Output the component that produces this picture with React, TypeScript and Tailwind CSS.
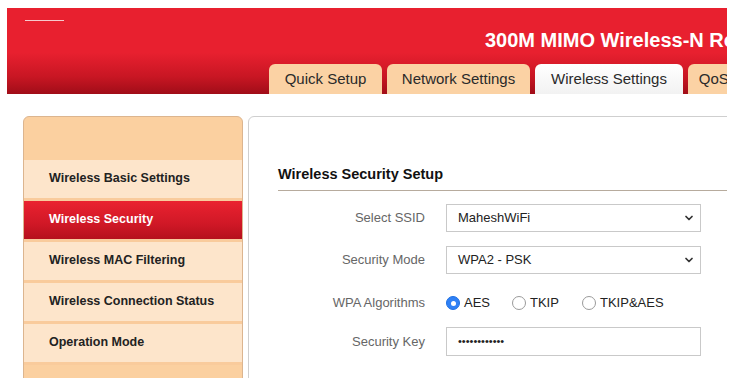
import { ChevronDown } from 'lucide-react';

const tabs = [
  { label: 'Quick Setup', w: 'w-[113px]', active: false },
  { label: 'Network Settings', w: 'w-[143px]', active: false },
  { label: 'Wireless Settings', w: 'w-[148px]', active: true },
  { label: 'QoS Settings', w: 'w-[110px]', active: false },
];

const menu = [
  { label: 'Wireless Basic Settings', active: false },
  { label: 'Wireless Security', active: true },
  { label: 'Wireless MAC Filtering', active: false },
  { label: 'Wireless Connection Status', active: false },
  { label: 'Operation Mode', active: false },
];

function Select({ value }: { value: string }) {
  return (
    <div className="flex h-[28px] w-[255px] items-center justify-between border border-[#c9c9c9] bg-white pl-[11px] pr-[5px] text-[13px] text-[#222]">
      <span>{value}</span>
      <ChevronDown size={12} strokeWidth={3.5} className="text-[#333]" />
    </div>
  );
}

function Radio({ label, checked }: { label: string; checked?: boolean }) {
  return (
    <div className="flex items-center gap-[4px]">
      {checked ? (
        <span className="flex h-[14px] w-[14px] items-center justify-center rounded-full border border-[#1d6fe3] bg-[#2f80f5]">
          <span className="h-[5px] w-[5px] rounded-full bg-white" />
        </span>
      ) : (
        <span className="h-[14px] w-[14px] rounded-full border border-[#9a9a9a] bg-white" />
      )}
      <span className="text-[13px] text-[#222]">{label}</span>
    </div>
  );
}

function Row({ label, className, children }: { label: string; className?: string; children: React.ReactNode }) {
  return (
    <div className={`flex items-center ${className ?? ''}`}>
      <div className="w-[176px] text-right text-[13px] text-[#666]">{label}</div>
      <div className="ml-[21px]">{children}</div>
    </div>
  );
}

export default function App() {
  return (
    <div
      className="h-[378px] w-[739px] overflow-hidden bg-white pl-[7px] pt-[8px]"
      style={{ fontFamily: '"Liberation Sans", Arial, sans-serif' }}
    >
      <div className="w-[720px] overflow-hidden">
        {/* header */}
        <div className="flex h-[86px] flex-col overflow-hidden bg-[linear-gradient(to_bottom,#e8202f_0%,#e8202f_52%,#c81623_80%,#a00d18_100%)]">
          <div className="ml-[18px] mt-[12px] h-px w-[39px] bg-[#f6c9cc]" />
          <div className="mt-[8px] whitespace-nowrap pl-[478px] text-[20px] font-bold leading-[23px] text-white">
            300M MIMO Wireless-N Router
          </div>
          <div className="mt-auto flex h-[30px] gap-[5px] pl-[262px]">
            {tabs.map((t) => (
              <div
                key={t.label}
                className={`flex shrink-0 items-center justify-center whitespace-nowrap rounded-t-[6px] text-[15px] text-[#2a2a2a] ${t.w} ${
                  t.active
                    ? 'bg-[linear-gradient(to_bottom,#ffffff,#f2f2f2)]'
                    : 'bg-[#fbd2a4]'
                }`}
              >
                {t.label}
              </div>
            ))}
          </div>
        </div>

        {/* body */}
        <div className="mt-[22px] flex gap-[5px] pl-[16px]">
          <div className="h-[300px] w-[220px] shrink-0 overflow-hidden rounded-t-[6px] border border-[#dcb58f] bg-[#fbd0a0]">
            <div className="h-[43px]" />
            {menu.map((m) => (
              <div
                key={m.label}
                className={`flex h-[41px] items-center border-b-[3px] border-[#f9cb9c] pb-[2px] pl-[25px] text-[12.5px] font-bold ${
                  m.active
                    ? 'bg-[linear-gradient(to_bottom,#ea2230,#d01826_60%,#b5101c)] text-white'
                    : 'bg-[#fde5cb] text-[#222]'
                }`}
              >
                {m.label}
              </div>
            ))}
          </div>

          <div className="h-[300px] w-[540px] shrink-0 rounded-tl-[6px] border border-[#cfcfcf] bg-white pl-[29px] pt-[49px]">
            <div className="text-[14.5px] font-bold leading-[17px] text-[#111]">Wireless Security Setup</div>
            <div className="mt-[7px] h-px bg-[#b7ab9d]" />
            <div className="-ml-[29px]">
              <Row label="Select SSID" className="mt-[13px]">
                <Select value="MaheshWiFi" />
              </Row>
              <Row label="Security Mode" className="mt-[14px]">
                <Select value="WPA2 - PSK" />
              </Row>
              <Row label="WPA Algorithms" className="mt-[14px] h-[30px]">
                <div className="flex items-center">
                  <div className="w-[66px]">
                    <Radio label="AES" checked />
                  </div>
                  <div className="w-[70px]">
                    <Radio label="TKIP" />
                  </div>
                  <Radio label="TKIP&AES" />
                </div>
              </Row>
              <Row label="Security Key" className="mt-[9px]">
                <div className="flex h-[29px] w-[255px] items-center border border-[#c9c9c9] bg-white pl-[11px] text-[11px] text-[#222]">
                  ••••••••••••
                </div>
              </Row>
            </div>
          </div>
        </div>
      </div>
    </div>
  );
}
